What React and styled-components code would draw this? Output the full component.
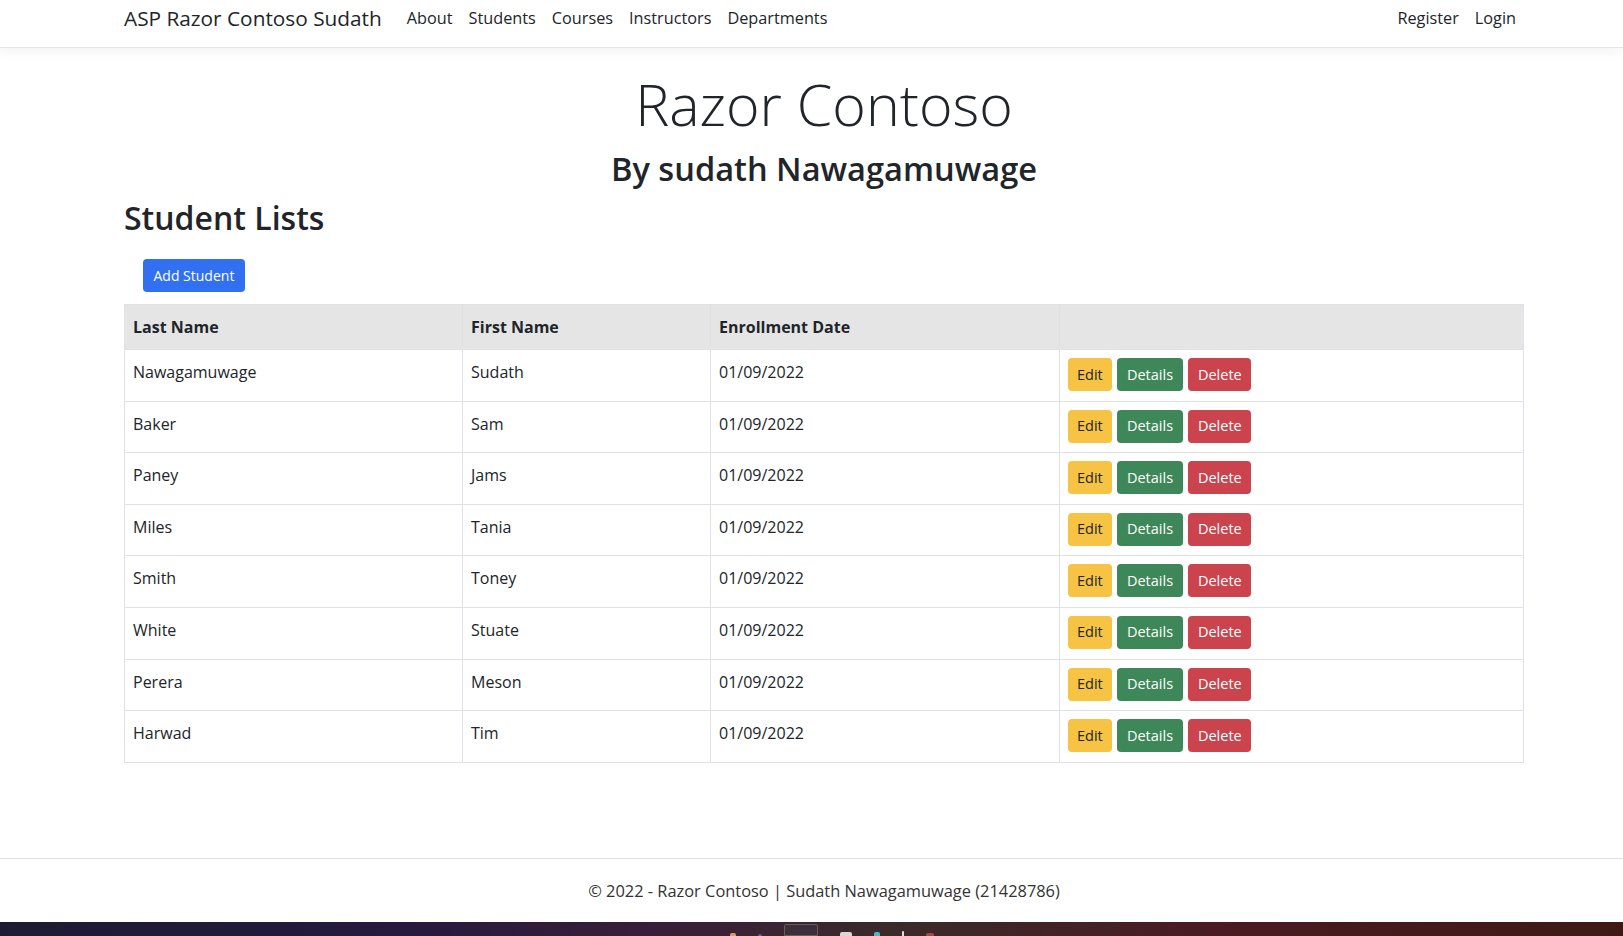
import React from "react";
import styled, { createGlobalStyle } from "styled-components";

const GlobalStyle = createGlobalStyle`
  html, body { margin: 0; padding: 0; }
  body {
    font-family: "Open Sans", "Noto Sans", sans-serif;
    font-size: 16px;
    line-height: 1.5;
    color: #212529;
    background: #fff;
  }
  * { box-sizing: border-box; }
`;

const Page = styled.div`
  min-height: 100vh;
  height: 936px;
  display: flex;
  flex-direction: column;
  overflow: hidden;
`;

const Container = styled.div`
  width: 1424px;
  margin-left: 112px;
  padding: 0 12px;
`;

const NavBar = styled.header`
  height: 48px;
  border-bottom: 1px solid #e5e5e5;
  box-shadow: 0 4px 12px rgba(0, 0, 0, 0.05);
  padding-bottom: 12px;
  background: #fff;
  position: relative;
  z-index: 1;
`;

const NavRow = styled(Container)`
  height: 35px;
  display: flex;
  align-items: center;
`;

const Brand = styled.a`
  font-size: 20.8px;
  line-height: 30px;
  color: #212529;
  text-decoration: none;
  margin-right: 17px;
  white-space: nowrap;
`;

const NavList = styled.nav`
  display: flex;
  align-items: center;
  flex: ${(p) => (p.$grow ? 1 : "none")};
`;

const NavLink = styled.a`
  font-size: 16.25px;
  line-height: 24px;
  padding: 0 8px;
  color: #212529;
  text-decoration: none;
  white-space: nowrap;
`;

const Main = styled.main`
  flex: 1;
  padding-top: 23px;
`;

const Hero = styled.div`
  text-align: center;
`;

const Title = styled.h1`
  margin: 0 0 12px;
  font-size: 57.3px;
  font-weight: 300;
  line-height: 67px;
`;

const Subtitle = styled.h2`
  margin: 0;
  font-size: 32.6px;
  font-weight: 600;
  line-height: 38px;
`;

const SectionTitle = styled.h2`
  margin: 11px 0 0;
  font-size: 32px;
  font-weight: 600;
  line-height: 38px;
`;

const ButtonRow = styled.div`
  padding: 22px 0 12px 19px;
  display: flex;
`;

const Btn = styled.a`
  display: inline-flex;
  align-items: center;
  justify-content: center;
  height: 33px;
  padding: 0 ${(p) => p.$px || 9}px;
  font-size: ${(p) => p.$fs || 14.5}px;
  border-radius: 4px;
  text-decoration: none;
  white-space: nowrap;
  background: ${(p) => p.$bg};
  color: ${(p) => p.$fg || "#fff"};
`;

const Table = styled.table`
  width: 1400px;
  border-collapse: collapse;
  table-layout: fixed;
  border: 1px solid #dee2e6;
`;

const Th = styled.th`
  background: #e5e5e5;
  text-align: left;
  font-weight: 700;
  padding: 10px 8px;
  line-height: 24px;
  border-bottom: 1px solid #dee2e6;
  border-left: 1px solid ${(p) => (p.$first ? "#dee2e6" : "#e0e0e0")};
`;

const Td = styled.td`
  vertical-align: top;
  padding: ${(p) => (p.$actions ? "8px 8px 9.6px" : "10px 8px 7.6px")};
  line-height: 24px;
  border: 1px solid #dee2e6;
`;

const Actions = styled.div`
  display: flex;
  gap: 5.5px;
`;

const Footer = styled.footer`
  border-top: 1px solid #e0e0e0;
  padding: 20px 0 19px;
`;

const FooterText = styled(Container)`
  text-align: center;
  font-size: 16.4px;
  line-height: 24px;
  color: #333;
`;

const Taskbar = styled.div`
  height: 14px;
  flex: none;
  background: linear-gradient(
    90deg,
    #1d1b34 0%,
    #261a3e 25%,
    #3a1d3a 40%,
    #3b2a2a 55%,
    #4a1b22 75%,
    #3f1a14 100%
  );
  display: flex;
  align-items: flex-end;
  justify-content: center;
  gap: 22px;
  padding-left: 40px;
`;

const TrayIcon = styled.span`
  display: block;
  width: ${(p) => p.$w || 8}px;
  height: ${(p) => p.$h || 4}px;
  background: ${(p) => p.$c};
  border-radius: 2px 2px 0 0;
  border: ${(p) => (p.$box ? "1px solid #6a5a5a" : "none")};
`;

const students = [
  ["Nawagamuwage", "Sudath"],
  ["Baker", "Sam"],
  ["Paney", "Jams"],
  ["Miles", "Tania"],
  ["Smith", "Toney"],
  ["White", "Stuate"],
  ["Perera", "Meson"],
  ["Harwad", "Tim"],
];

export default function App() {
  return (
    <>
      <GlobalStyle />
      <Page>
        <NavBar>
          <NavRow>
            <Brand href="#">ASP Razor Contoso Sudath</Brand>
            <NavList $grow>
              <NavLink href="#">About</NavLink>
              <NavLink href="#">Students</NavLink>
              <NavLink href="#">Courses</NavLink>
              <NavLink href="#">Instructors</NavLink>
              <NavLink href="#">Departments</NavLink>
            </NavList>
            <NavList>
              <NavLink href="#">Register</NavLink>
              <NavLink href="#">Login</NavLink>
            </NavList>
          </NavRow>
        </NavBar>
        <Main>
          <Container>
            <Hero>
              <Title>Razor Contoso</Title>
              <Subtitle>By sudath Nawagamuwage</Subtitle>
            </Hero>
            <SectionTitle>Student Lists</SectionTitle>
            <ButtonRow>
              <Btn href="#" $bg="#3170f0" $px={10.5} $fs={14}>
                Add Student
              </Btn>
            </ButtonRow>
            <Table>
              <colgroup>
                <col style={{ width: 338 }} />
                <col style={{ width: 248 }} />
                <col style={{ width: 349 }} />
                <col />
              </colgroup>
              <thead>
                <tr>
                  <Th $first>Last Name</Th>
                  <Th>First Name</Th>
                  <Th>Enrollment Date</Th>
                  <Th />
                </tr>
              </thead>
              <tbody>
                {students.map(([last, first]) => (
                  <tr key={last}>
                    <Td>{last}</Td>
                    <Td>{first}</Td>
                    <Td>01/09/2022</Td>
                    <Td $actions>
                      <Actions>
                        <Btn href="#" $bg="#f6c344" $fg="#212529" $px={9}>
                          Edit
                        </Btn>
                        <Btn href="#" $bg="#3e8758" $px={9.7}>
                          Details
                        </Btn>
                        <Btn href="#" $bg="#cb434c" $px={9.7}>
                          Delete
                        </Btn>
                      </Actions>
                    </Td>
                  </tr>
                ))}
              </tbody>
            </Table>
          </Container>
        </Main>
        <Footer>
          <FooterText>© 2022 - Razor Contoso | Sudath Nawagamuwage (21428786)</FooterText>
        </Footer>
        <Taskbar>
          <TrayIcon $c="#d9a050" $w={6} $h={3} />
          <TrayIcon $c="#6a5aa0" $w={4} $h={2} />
          <TrayIcon $c="#3a2f3a" $w={34} $h={12} $box />
          <TrayIcon $c="#d8d8d8" $w={12} $h={4} />
          <TrayIcon $c="#38c0d0" $w={6} $h={4} />
          <TrayIcon $c="#e0e0e0" $w={2} $h={5} />
          <TrayIcon $c="#a04a4a" $w={8} $h={3} />
        </Taskbar>
      </Page>
    </>
  );
}
